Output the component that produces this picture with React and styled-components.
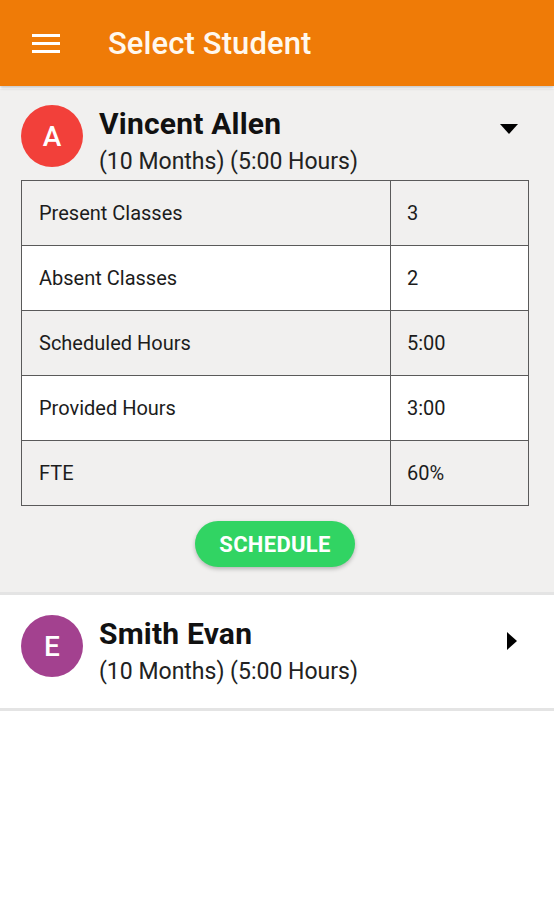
import React from 'react';
import styled, { createGlobalStyle } from 'styled-components';

const GlobalStyle = createGlobalStyle`
    html, body {
        margin: 0;
        padding: 0;
        background: #ffffff;
        font-family: Roboto, 'Noto Sans', 'Liberation Sans', sans-serif;
    }
`;

const students = [
    {
        initial: 'A',
        name: 'Vincent Allen',
        meta: '(10 Months) (5:00 Hours)',
        color: '#f2403a',
        open: true,
        stats: [
            ['Present Classes', '3'],
            ['Absent Classes', '2'],
            ['Scheduled Hours', '5:00'],
            ['Provided Hours', '3:00'],
            ['FTE', '60%'],
        ],
    },
    {
        initial: 'E',
        name: 'Smith Evan',
        meta: '(10 Months) (5:00 Hours)',
        color: '#a3418f',
        open: false,
        stats: [],
    },
];

function MenuIcon() {
    return (
        <svg width='28' height='20' viewBox='0 0 28 20'>
            <rect x='0' y='1' width='28' height='3' fill='#fff' />
            <rect x='0' y='9' width='28' height='3' fill='#fff' />
            <rect x='0' y='17' width='28' height='3' fill='#fff' />
        </svg>
    );
}

function Caret({ open }) {
    return open ? (
        <svg width='18' height='10' viewBox='0 0 18 10'>
            <path d='M0 0 L18 0 L9 10 Z' fill='#000' />
        </svg>
    ) : (
        <svg width='10' height='18' viewBox='0 0 10 18'>
            <path d='M0 0 L10 9 L0 18 Z' fill='#000' />
        </svg>
    );
}

function StudentCard({ student }) {
    const { initial, name, meta, color, open, stats } = student;

    return (
        <Card open={open}>
            <CardHead>
                <Avatar color={color}>{initial}</Avatar>
                <Info>
                    <Name>{name}</Name>
                    <Meta>{meta}</Meta>
                </Info>
                <CaretBox open={open}>
                    <Caret open={open} />
                </CaretBox>
            </CardHead>
            {open && (
                <>
                    <StatsTable>
                        <tbody>
                            {stats.map(([label, value], i) => (
                                <StatRow key={label} shaded={i % 2 === 0}>
                                    <LabelCell>{label}</LabelCell>
                                    <ValueCell>{value}</ValueCell>
                                </StatRow>
                            ))}
                        </tbody>
                    </StatsTable>
                    <ButtonRow>
                        <ScheduleButton>SCHEDULE</ScheduleButton>
                    </ButtonRow>
                </>
            )}
        </Card>
    );
}

export default function App() {
    return (
        <Page>
            <GlobalStyle />
            <TopBar>
                <MenuIcon />
                <Title>Select Student</Title>
            </TopBar>
            <List>
                {students.map((s) => (
                    <StudentCard key={s.name} student={s} />
                ))}
            </List>
        </Page>
    );
}

const Page = styled.div`
    width: 554px;
    min-height: 900px;
    background: #ffffff;
`;

const TopBar = styled.header`
    position: relative;
    z-index: 2;
    height: 86px;
    display: flex;
    align-items: center;
    padding-left: 32px;
    gap: 48px;
    background: #ef7b07;
    box-shadow: 0 2px 3px rgba(0, 0, 0, 0.22);
    box-sizing: border-box;
`;

const Title = styled.h1`
    margin: 0;
    color: #fff8ee;
    font-size: 31px;
    font-weight: 500;
    letter-spacing: 0.1px;
`;

const List = styled.div`
    display: flex;
    flex-direction: column;
    padding-top: 3px;
`;

const Card = styled.section.withConfig({ shouldForwardProp: (p) => p !== 'open' })`
    background: ${(p) => (p.open ? '#f1f0ef' : '#ffffff')};
    padding: ${(p) => (p.open ? '16px 0 25px' : '20px 0 22px')};
    border-bottom: 3px solid #e4e4e4;
`;

const CardHead = styled.div`
    display: flex;
    align-items: flex-start;
    padding: 0 36px 0 21px;
`;

const Avatar = styled.div`
    width: 62px;
    height: 62px;
    flex: none;
    border-radius: 50%;
    background: ${(p) => p.color};
    color: #ffffff;
    display: flex;
    align-items: center;
    justify-content: center;
    font-size: 28px;
    font-weight: 500;
`;

const Info = styled.div`
    flex: 1;
    margin-left: 16px;
    padding-top: 2px;
`;

const Name = styled.div`
    font-size: 30px;
    font-weight: 700;
    line-height: 34px;
    letter-spacing: 0.2px;
    color: #111;
`;

const Meta = styled.div`
    margin-top: 7px;
    font-size: 23px;
    line-height: 28px;
    color: #222;
`;

const CaretBox = styled.div.withConfig({ shouldForwardProp: (p) => p !== 'open' })`
    display: flex;
    margin-top: ${(p) => (p.open ? '19px' : '17px')};
    margin-right: ${(p) => (p.open ? '0' : '1px')};
`;

const StatsTable = styled.table`
    margin: 4px 25px 0 21px;
    width: 508px;
    border-collapse: collapse;
    border: 1.5px solid #5a5a5a;
`;

const StatRow = styled.tr.withConfig({ shouldForwardProp: (p) => p !== 'shaded' })`
    height: 65px;
    background: ${(p) => (p.shaded ? '#f1f0ef' : '#ffffff')};
`;

const LabelCell = styled.td`
    width: 351px;
    padding: 0 0 0 17px;
    border: 1.5px solid #5a5a5a;
    font-size: 20px;
    color: #1c1c1c;
`;

const ValueCell = styled.td`
    padding: 0 0 0 16px;
    border: 1.5px solid #5a5a5a;
    font-size: 20px;
    color: #1c1c1c;
`;

const ButtonRow = styled.div`
    display: flex;
    justify-content: center;
    margin-top: 15px;
`;

const ScheduleButton = styled.button`
    width: 160px;
    height: 46px;
    border: none;
    border-radius: 23px;
    background: #31d463;
    color: #ffffff;
    font-family: inherit;
    font-size: 22px;
    font-weight: 700;
    letter-spacing: 0.3px;
    box-shadow: 0 2px 4px rgba(0, 0, 0, 0.25);
    margin-left: -4px;
`;
